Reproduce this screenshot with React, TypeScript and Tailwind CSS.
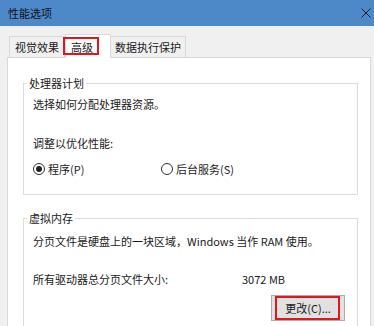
import React from "react";

const font = { fontFamily: '"Noto Sans CJK SC", "Microsoft YaHei", sans-serif' };

function Radio({ checked, label }: { checked?: boolean; label: string }) {
  return (
    <div className="flex items-center gap-[3px]">
      <span className="w-[12px] h-[12px] rounded-full border border-[#333] bg-white flex items-center justify-center">
        {checked && <span className="w-[6px] h-[6px] rounded-full bg-[#222]" />}
      </span>
      <span>{label}</span>
    </div>
  );
}

export default function App() {
  return (
    <div
      className="w-[374px] h-[326px] bg-[#f0f0f0] overflow-hidden flex flex-col text-[11px] leading-[16px] text-[#1a1a1a]"
      style={font}
    >
      <div className="h-[26px] bg-[#4d88c9] flex items-center justify-between pl-[8px] pr-[3px] shrink-0">
        <span className="text-[11px] text-[#111]">性能选项</span>
        <svg width="10" height="10" viewBox="0 0 10 10">
          <path d="M0.5 0.5 L9.5 9.5 M9.5 0.5 L0.5 9.5" stroke="#1a1a1a" strokeWidth="1" />
        </svg>
      </div>
      <div className="relative flex items-end pl-[9px] h-[31px] shrink-0 z-10">
        <div className="h-[21px] px-[5px] flex items-center border border-b-0 border-[#d9d9d9] bg-[#f0f0f0]">视觉效果</div>
        <div className="h-[24px] w-[46px] -mb-[1px] pl-[5px] flex items-center border border-b-0 border-[#d9d9d9] bg-white">高级</div>
        <div className="h-[21px] px-[4px] flex items-center border border-b-0 border-l-0 border-[#d9d9d9] bg-[#f0f0f0]">数据执行保护</div>
        <div className="absolute left-[63px] top-[11px] w-[36px] h-[18px] border-2 border-[#e3161c]" />
      </div>
      <div className="ml-[7px] w-[364px] flex-1 border border-[#d9d9d9] bg-white pl-[15px] pr-[12px] pt-[25px]">
        <div className="relative border border-[#dcdcdc] h-[112px] pl-[9px] pt-[12px]">
          <span className="absolute -top-[9px] left-[3px] bg-white px-[2px]">处理器计划</span>
          <div>选择如何分配处理器资源。</div>
          <div className="mt-[23px]">调整以优化性能:</div>
          <div className="mt-[10px] flex items-center">
            <div className="w-[128px]">
              <Radio checked label="程序(P)" />
            </div>
            <Radio label="后台服务(S)" />
          </div>
        </div>
        <div className="relative border border-[#dcdcdc] mt-[23px] h-[140px] pl-[9px] pt-[14px]">
          <span className="absolute -top-[9px] left-[3px] bg-white px-[2px]">虚拟内存</span>
          <div>分页文件是硬盘上的一块区域，Windows 当作 RAM 使用。</div>
          <div className="mt-[22px] flex">
            <span className="w-[209px]">所有驱动器总分页文件大小:</span>
            <span>3072 MB</span>
          </div>
          <div className="mt-[8px] flex justify-end pr-[12px]">
            <div className="relative w-[74px] h-[26px] bg-[#e1e1e1] border border-[#adadad] flex items-center justify-center">
              更改(C)...
              <div className="absolute left-[3px] top-[0px] w-[65px] h-[24px] border-2 border-[#e3161c]" />
            </div>
          </div>
        </div>
      </div>
    </div>
  );
}
